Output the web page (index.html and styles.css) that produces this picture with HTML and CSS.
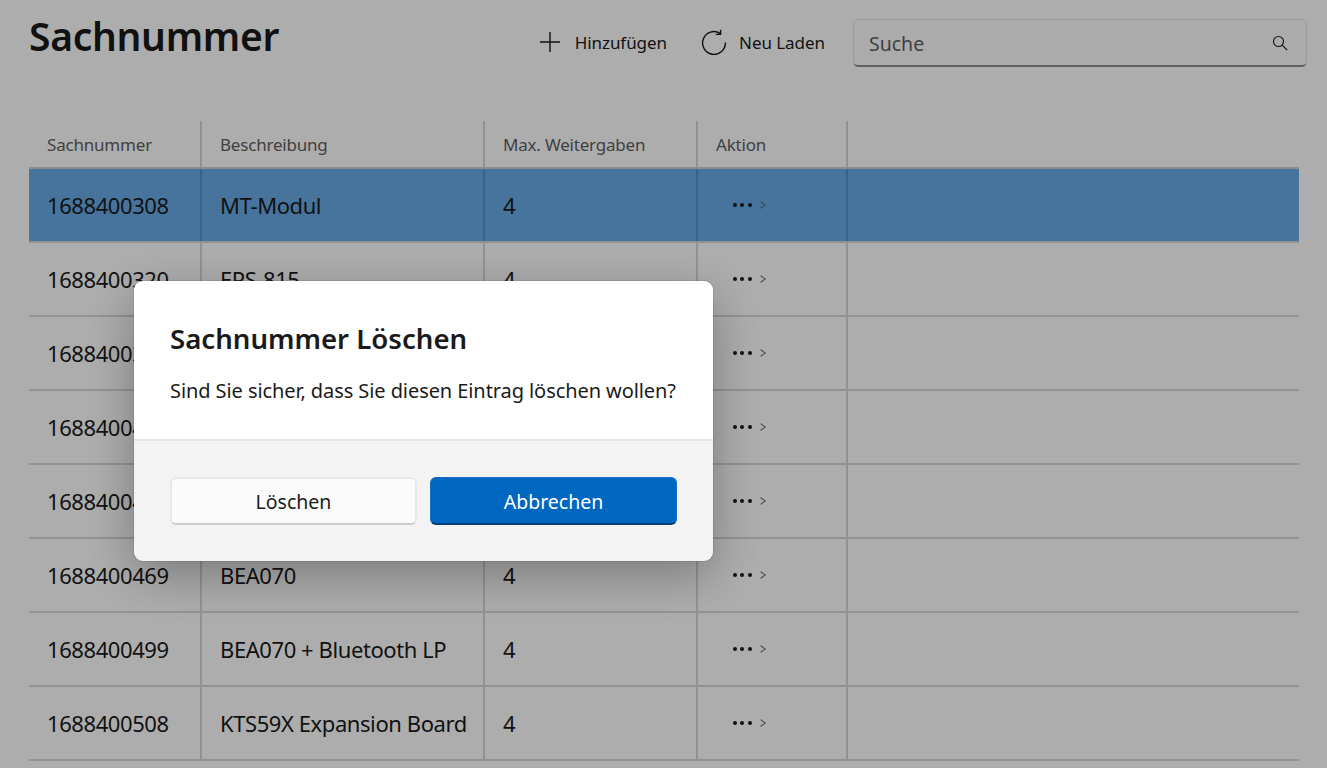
FILE: index.html
```html
<!DOCTYPE html>
<html lang="de">
    <head>
        <meta charset="utf-8">
        <title>Sachnummer</title>
        <link rel="stylesheet" href="styles.css">
    </head>
    <body>
        <div class="page">
            <header class="topbar">
                <h1>Sachnummer</h1>
                <div class="tools">
                    <a class="tool" href="#">
                        <svg width="22" height="22" viewBox="0 0 22 22"><path d="M11 1v20M1 11h20" fill="none" stroke="#1a1a1a" stroke-width="1.4"/></svg>
                        <span>Hinzufügen</span>
                    </a>
                    <a class="tool" href="#">
                        <svg width="26" height="26" viewBox="0 0 26 26"><path d="M19.2 4.4A11.4 11.4 0 1 0 24.4 13.5M19.6 .8v4.6h-4.8" fill="none" stroke="#1a1a1a" stroke-width="1.4"/></svg>
                        <span>Neu Laden</span>
                    </a>
                    <div class="search">
                        <span>Suche</span>
                        <svg width="16" height="16" viewBox="0 0 16 16"><circle cx="6.5" cy="6.5" r="5" fill="none" stroke="#1a1a1a" stroke-width="1.1"/><path d="M10.2 10.2l5 5" stroke="#1a1a1a" stroke-width="1.2"/></svg>
                    </div>
                </div>
            </header>

            <div class="table">
                <div class="row head">
                    <div>Sachnummer</div>
                    <div>Beschreibung</div>
                    <div>Max. Weitergaben</div>
                    <div>Aktion</div>
                    <div></div>
                </div>
                <div class="row current">
                    <div>1688400308</div><div>MT-Modul</div><div>4</div>
                    <div class="more"><b></b><b></b><b></b><i></i></div><div></div>
                </div>
                <div class="row">
                    <div>1688400320</div><div>EPS-815</div><div>4</div>
                    <div class="more"><b></b><b></b><b></b><i></i></div><div></div>
                </div>
                <div class="row">
                    <div>1688400345</div><div>BEA060</div><div>4</div>
                    <div class="more"><b></b><b></b><b></b><i></i></div><div></div>
                </div>
                <div class="row">
                    <div>1688400411</div><div>BEA065</div><div>4</div>
                    <div class="more"><b></b><b></b><b></b><i></i></div><div></div>
                </div>
                <div class="row">
                    <div>1688400440</div><div>BEA067</div><div>4</div>
                    <div class="more"><b></b><b></b><b></b><i></i></div><div></div>
                </div>
                <div class="row">
                    <div>1688400469</div><div>BEA070</div><div>4</div>
                    <div class="more"><b></b><b></b><b></b><i></i></div><div></div>
                </div>
                <div class="row">
                    <div>1688400499</div><div>BEA070 + Bluetooth LP</div><div>4</div>
                    <div class="more"><b></b><b></b><b></b><i></i></div><div></div>
                </div>
                <div class="row">
                    <div>1688400508</div><div>KTS59X Expansion Board</div><div>4</div>
                    <div class="more"><b></b><b></b><b></b><i></i></div><div></div>
                </div>
            </div>
        </div>

        <div class="scrim">
            <div class="dialog">
                <div class="dialog-body">
                    <h2>Sachnummer Löschen</h2>
                    <p>Sind Sie sicher, dass Sie diesen Eintrag löschen wollen?</p>
                </div>
                <div class="dialog-foot">
                    <button class="btn">Löschen</button>
                    <button class="btn primary">Abbrechen</button>
                </div>
            </div>
        </div>
    </body>
</html>
```

FILE: styles.css
```css
*{
    margin:0;
    padding:0;
    box-sizing:border-box;
}
html,body{
    height:100%;
    overflow:hidden;
}
body{
    font-family:"Noto Sans","Open Sans",sans-serif;
    color:#1a1a1a;
    background:#fff;
}
.page{
    height:768px;
    overflow:hidden;
    padding:0 28px 0 29px;
}

/* top bar */
.topbar{
    display:flex;
    justify-content:space-between;
    height:121px;
    padding-top:8px;
}
.topbar h1{
    font-size:39px;
    font-weight:600;
    line-height:56px;
    letter-spacing:-.3px;
}
.tools{
    display:flex;
    align-items:flex-start;
    padding-top:11px;
    margin-right:-8px;
}
.tool{
    display:flex;
    align-items:center;
    height:46px;
    color:#1a1a1a;
    text-decoration:none;
    font-size:17px;
    letter-spacing:-.05px;
    gap:14px;
    margin-right:34px;
}
.tool + .tool{
    gap:12px;
    margin-right:28px;
}
.search{
    display:flex;
    align-items:center;
    justify-content:space-between;
    width:454px;
    height:48px;
    padding:0 18px 0 15px;
    background:#fdfdfd;
    border:1px solid #e6e6e6;
    border-bottom:2px solid #8f8f8f;
    border-radius:5px;
    font-size:19.5px;
    color:#5f5f5f;
}
.search span{
    padding-top:1px;
}

/* table */
.table{
    width:1270px;
}
.row{
    display:grid;
    grid-template-columns:173px 283px 213px 150px 1fr;
    height:74px;
    border-bottom:2px solid #d8d8d8;
    font-size:22px;
    letter-spacing:-.42px;
}
.row > div{
    display:flex;
    align-items:center;
    padding-left:18px;
    border-right:2px solid #d8d8d8;
}
.row > div:last-child{
    border-right:0;
}
.head{
    height:48px;
    font-size:17px;
    color:#5f5f5f;
    letter-spacing:-.2px;
    border-bottom:2px solid #d0d0d0;
}
.current{
    height:74px;
    background:#67ace8;
}
.current > div{
    border-right-color:#5893c6;
}
.more{
    gap:3.3px;
    padding-left:35px !important;
}
.more b{
    width:4px;
    height:4px;
    border-radius:50%;
    background:#1a1a1a;
}
.more i{
    width:6px;
    height:6px;
    margin-left:3px;
    border-top:1px solid #666;
    border-right:1px solid #666;
    transform:rotate(45deg) skew(-8deg,-8deg);
}

/* dialog */
.scrim{
    position:fixed;
    top:0;
    left:0;
    right:0;
    bottom:0;
    background:rgba(0,0,0,.32);
}
.dialog{
    position:absolute;
    left:134px;
    top:281px;
    width:579px;
    height:280px;
    border-radius:9px;
    overflow:hidden;
    box-shadow:0 0 0 1px rgba(0,0,0,.08),0 14px 50px rgba(0,0,0,.3);
    display:flex;
    flex-direction:column;
}
.dialog-body{
    height:160px;
    padding:35px 36px 0;
    background:#fff;
    border-bottom:2px solid #e5e5e5;
}
.dialog-body h2{
    font-size:27.6px;
    font-weight:600;
    line-height:44px;
}
.dialog-body p{
    font-size:20px;
    line-height:30px;
    margin-top:16px;
    letter-spacing:-.08px;
    white-space:nowrap;
}
.dialog-foot{
    flex:1;
    display:flex;
    gap:13px;
    padding:36px 36px 0;
    background:#f3f3f3;
}
.btn{
    width:247px;
    height:48px;
    font:inherit;
    font-size:19.5px;
    color:#1a1a1a;
    background:#fbfbfb;
    border:2px solid #e8e8e8;
    border-bottom:2px solid #cccccc;
    border-radius:6px;
    cursor:pointer;
}
.btn.primary{
    padding-top:1px;
    color:#fff;
    background:#0067c0;
    border:1px solid #1470c4;
    border-bottom:2px solid #003e73;
}
```
